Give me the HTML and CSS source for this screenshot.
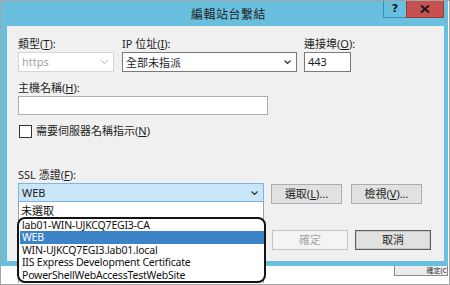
FILE: index.html
```html
<!DOCTYPE html>
<html>
<head>
  <title>編輯站台繫結</title>
  <link rel="stylesheet" href="styles.css">
</head>
<body>
  <div class="shot">
    <div class="window">
      <div class="titlebar">
        <div></div>
        <div class="title">編輯站台繫結</div>
        <div class="caption-buttons">
          <div class="cap-btn help">?</div>
          <div class="cap-btn close">
            <svg width="10" height="8" viewBox="0 0 10 8"><path d="M1 0.5 L9 7.5 M9 0.5 L1 7.5" stroke="#1a1a1a" stroke-width="2"/></svg>
          </div>
        </div>
      </div>

      <div class="client">
        <div class="row-top">
          <div class="field type-field">
            <label>類型(<u>T</u>):</label>
            <div class="combo disabled">
              <span>https</span>
              <svg class="chev" width="7" height="4" viewBox="0 0 7 4"><path d="M0.5 0.5 L3.5 3.5 L6.5 0.5" fill="none" stroke="#b5b5b5" stroke-width="1"/></svg>
            </div>
          </div>
          <div class="field ip-field">
            <label>IP 位址(<u>I</u>):</label>
            <div class="combo">
              <span class="cjk">全部未指派</span>
              <svg class="chev" width="7" height="4" viewBox="0 0 7 4"><path d="M0.5 0.5 L3.5 3.5 L6.5 0.5" fill="none" stroke="#333" stroke-width="1.2"/></svg>
            </div>
          </div>
          <div class="field port-field">
            <label>連接埠(<u>O</u>):</label>
            <div class="textbox dark">443</div>
          </div>
        </div>

        <div class="field host-field">
          <label>主機名稱(<u>H</u>):</label>
          <div class="textbox host"></div>
        </div>

        <div class="check-row">
          <span class="checkbox"></span>
          <span class="check-label">需要伺服器名稱指示(<u>N</u>)</span>
        </div>

        <label class="ssl-label">SSL 憑證(<u>F</u>):</label>
        <div class="ssl-row">
          <div class="ssl-field">
            <div class="combo focused">
              <span>WEB</span>
              <svg class="chev" width="7" height="4" viewBox="0 0 7 4"><path d="M0.5 0.5 L3.5 3.5 L6.5 0.5" fill="none" stroke="#333" stroke-width="1.2"/></svg>
            </div>
            <div class="popup">
              <div class="item cjk">未選取</div>
              <div class="callout">
                <div class="item">lab01-WIN-UJKCQ7EGI3-CA</div>
                <div class="item selected">WEB</div>
                <div class="item">WIN-UJKCQ7EGI3.lab01.local</div>
                <div class="item">IIS Express Development Certificate</div>
                <div class="item">PowerShellWebAccessTestWebSite</div>
              </div>
            </div>
          </div>
          <button class="btn">選取(<u>L</u>)...</button>
          <button class="btn view">檢視(<u>V</u>)...</button>
        </div>

        <div class="dialog-buttons">
          <button class="btn wide" disabled>確定</button>
          <button class="btn wide default">取消</button>
        </div>
      </div>
    </div>
    <div class="behind">確定(C</div>
  </div>
</body>
</html>
```

FILE: styles.css
```css
body {
  margin: 0;
  background-color: #fff;
  font-family: "Noto Sans", "Noto Sans CJK TC", sans-serif;
  font-size: 11px;
  color: #1e1e1e;
}

.shot {
  position: relative;
  width: 450px;
  height: 285px;
  box-sizing: border-box;
  border: 1px solid #a4a4a4;
  overflow: hidden;
  background-color: #fff;
}

.window {
  width: 447px;
  height: 265px;
  box-sizing: border-box;
  background-color: #68c0de;
  padding: 0 4px 5px 6px;
  display: flex;
  flex-direction: column;
}

/* Title bar */
.titlebar {
  height: 25px;
  display: grid;
  grid-template-columns: 1fr auto 1fr;
  align-items: start;
}

.title {
  font-family: "Noto Sans CJK TC", sans-serif;
  font-size: 12px;
  line-height: 25px;
  color: #222;
  letter-spacing: 0.5px;
  padding-left: 6px;
}

.caption-buttons {
  justify-self: end;
  display: flex;
  margin-top: -1px;
}

.cap-btn {
  height: 18px;
  box-sizing: border-box;
  display: flex;
  align-items: center;
  justify-content: center;
}

.help {
  width: 23px;
  border: 1px solid #3b8fae;
  border-top: none;
  border-right: none;
  font-weight: bold;
  font-size: 11px;
  font-family: "DejaVu Sans", sans-serif;
  color: #111;
}

.close {
  width: 38px;
  background-color: #c75050;
  border: 1px solid #9c3a3a;
  border-top: none;
}

/* Client area */
.client {
  flex: 1;
  background-color: #f0f0f0;
  padding: 11px 13px 0 11px;
  display: flex;
  flex-direction: column;
}

label,
.check-label {
  display: block;
  line-height: 14px;
  height: 14px;
  color: #1e1e1e;
  white-space: nowrap;
}

u {
  text-decoration: underline;
  text-underline-offset: 1px;
}

.row-top {
  display: flex;
  gap: 8px;
}

.field label {
  margin-bottom: 1px;
}

.type-field { width: 96px; }
.ip-field { width: 175px; }
.port-field { width: 47px; margin-left: -1px; }

.combo,
.textbox {
  height: 20px;
  box-sizing: border-box;
  background-color: #fff;
  border: 1px solid #7a7a7a;
  display: flex;
  align-items: center;
  padding: 0 5px 0 3px;
  line-height: 18px;
}

.combo span {
  flex: 1;
}

.combo.disabled {
  border-color: #d6d6d6;
  color: #a5a5a5;
}

.combo.focused {
  height: 19px;
  background-color: #c9e5f8;
  border-color: #7eb4ea;
}

.cjk {
  font-family: "Noto Sans CJK TC", sans-serif;
}

.host-field {
  margin-top: 9px;
  width: 250px;
}

.textbox.host {
  height: 19px;
  border-color: #acacac;
}

.check-row {
  display: flex;
  align-items: center;
  gap: 4px;
  margin-top: 9px;
  height: 14px;
}

.checkbox {
  width: 13px;
  height: 13px;
  box-sizing: border-box;
  border: 1px solid #333;
  background-color: #fff;
  margin-left: 1px;
}

.ssl-label {
  margin-top: 30px;
  margin-bottom: 1px;
}

.ssl-row {
  display: flex;
  align-items: flex-start;
}

.ssl-field {
  position: relative;
  width: 246px;
  margin-right: 7px;
}

.btn {
  font-family: "Noto Sans", "Noto Sans CJK TC", sans-serif;
  font-size: 11px;
  color: #1e1e1e;
  width: 71px;
  height: 20px;
  margin-top: 1px;
  padding: 0;
  background-color: #e1e1e1;
  border: 1px solid #adadad;
  border-radius: 0;
  line-height: 18px;
}

.btn.view {
  margin-left: 9px;
}

.dialog-buttons {
  display: flex;
  justify-content: flex-end;
  gap: 7px;
  margin-top: 25px;
}

.btn.wide {
  width: 76px;
}

.btn[disabled] {
  background-color: #f4f4f4;
  border-color: #c4c4c4;
  color: #a8a8a8;
}

.btn.default {
  border: 1px solid #5e5e5e;
  box-shadow: inset 0 0 0 1px #c8c8c8;
}

/* Open dropdown list */
.popup {
  position: absolute;
  top: 100%;
  left: 0;
  width: 246px;
  box-sizing: border-box;
  background-color: #fff;
  border-left: 1px solid #a0a0a0;
  border-right: 1px solid #a0a0a0;
  padding-top: 2px;
  z-index: 2;
}

.item {
  height: 12.5px;
  line-height: 12.5px;
  padding-left: 2px;
  white-space: nowrap;
  color: #111;
  font-size: 10.5px;
  letter-spacing: -0.2px;
}

.item.cjk {
  font-size: 11px;
  letter-spacing: 0;
}

.item.selected {
  background-color: #3d83c8;
  color: #fff;
}

.callout {
  border: 2px solid #141414;
  border-radius: 8px;
  margin: 0 -3px 0 -2px;
  padding-left: 1px;
  overflow: hidden;
  background-color: #fff;
}

.behind {
  margin-left: 393px;
  width: 54px;
  height: 10px;
  box-sizing: border-box;
  background-color: #ececec;
  border: 1px solid #8a8a8a;
  border-top: none;
  font-size: 7px;
  line-height: 9px;
  text-align: right;
  overflow: hidden;
  white-space: nowrap;
  color: #333;
}
```
